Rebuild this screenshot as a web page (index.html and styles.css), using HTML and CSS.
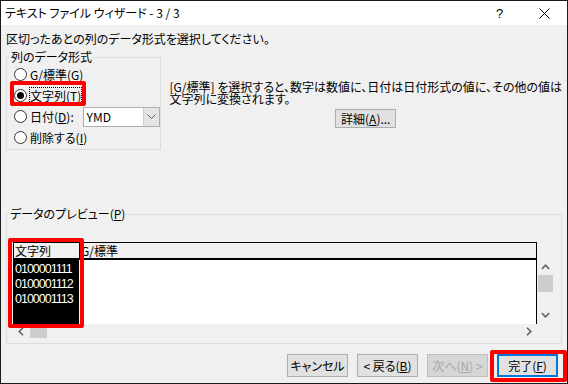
FILE: index.html
```html
<!DOCTYPE html>
<html lang="ja">
<head>
<meta charset="utf-8">
<title>テキスト ファイル ウィザード</title>
<link rel="stylesheet" href="styles.css">
</head>
<body>
<div class="window">
  <div class="titlebar">
    <span class="title">テキスト ファイル ウィザード - 3 / 3</span>
    <span class="tbtn help">?</span>
    <span class="tbtn close"><svg width="11" height="11" viewBox="0 0 11 11"><path d="M0.5 0.5L10.5 10.5M10.5 0.5L0.5 10.5" stroke="#000" stroke-width="1" fill="none"/></svg></span>
  </div>
  <div class="content">
    <p class="instruction">区切ったあとの列のデータ形式を選択してください。</p>
    <div class="top">
      <fieldset class="group format">
        <legend>列のデータ形式</legend>
        <div class="radio"><span class="circle"></span><span>G/標準(<u>G</u>)</span></div>
        <div class="radio"><span class="circle on"></span><span class="focus">文字列(<u>T</u>)</span></div>
        <div class="radio"><span class="circle"></span><span class="date-label">日付(<u>D</u>):</span>
          <span class="select"><span class="value">YMD</span><span class="arrow"><svg width="9" height="5" viewBox="0 0 9 5"><path d="M0.5 0.5L4.5 4.5L8.5 0.5" stroke="#606060" stroke-width="1" fill="none"/></svg></span></span>
        </div>
        <div class="radio"><span class="circle"></span><span>削除する(<u>I</u>)</span></div>
      </fieldset>
      <div class="desc">
        <p class="line">[G/標準] を選択すると、数字は数値に、日付は日付形式の値に、その他の値は</p>
        <p class="line">文字列に変換されます。</p>
        <button class="btn small">詳細(<u>A</u>)...</button>
      </div>
    </div>
    <fieldset class="group preview">
      <legend>データのプレビュー(<u>P</u>)</legend>
      <div class="grid">
        <div class="grid-top">
          <div class="table">
            <div class="thead">
              <span class="c1">文字列</span>
              <span class="c2">G/標準</span>
            </div>
            <div class="tbody">
              <div class="c1 data">
                <div>0100001111</div>
                <div>0100001112</div>
                <div>0100001113</div>
              </div>
              <div class="c2"></div>
            </div>
          </div>
          <div class="vscroll">
            <span class="arrow-box"><svg width="9" height="6" viewBox="0 0 9 6"><path d="M0.8 5L4.5 1.2L8.2 5" stroke="#606060" stroke-width="1.6" fill="none"/></svg></span>
            <span class="vthumb"></span>
            <span class="spacer"></span>
            <span class="arrow-box"><svg width="9" height="6" viewBox="0 0 9 6"><path d="M0.8 1L4.5 4.8L8.2 1" stroke="#606060" stroke-width="1.6" fill="none"/></svg></span>
          </div>
        </div>
        <div class="hscroll">
          <span class="harrow"><svg width="6" height="9" viewBox="0 0 6 9"><path d="M5 0.8L1.2 4.5L5 8.2" stroke="#606060" stroke-width="1.6" fill="none"/></svg></span>
          <span class="hthumb"></span>
          <span class="spacer"></span>
          <span class="harrow"><svg width="6" height="9" viewBox="0 0 6 9"><path d="M1 0.8L4.8 4.5L1 8.2" stroke="#606060" stroke-width="1.6" fill="none"/></svg></span>
        </div>
      </div>
    </fieldset>
    <div class="buttons">
      <button class="btn">キャンセル</button>
      <button class="btn">&lt; 戻る(<u>B</u>)</button>
      <button class="btn disabled">次へ(<u>N</u>) &gt;</button>
      <button class="btn default">完了(<u>F</u>)</button>
    </div>
  </div>
  <div class="hl hl1"></div>
  <div class="hl hl2"></div>
  <div class="hl hl3"></div>
</div>
</body>
</html>
```

FILE: styles.css
```css
html, body {
  margin: 0;
  padding: 0;
}
body {
  width: 568px;
  height: 384px;
  font-family: "Noto Sans CJK JP", "Noto Sans", sans-serif;
  font-size: 12px;
  font-feature-settings: "palt";
  color: #000;
}
.window {
  position: relative;
  box-sizing: border-box;
  width: 568px;
  height: 384px;
  border: 1px solid #1a1a1a;
  background: #f0f0f0;
  display: flex;
  flex-direction: column;
}
.titlebar {
  height: 24px;
  background: #fff;
  display: flex;
  align-items: center;
}
.title {
  flex: 1;
  padding-left: 4px;
  line-height: 24px;
  white-space: nowrap;
}
.tbtn {
  width: 46px;
  height: 24px;
  display: flex;
  align-items: center;
  justify-content: center;
}
.help {
  font-family: "Liberation Sans", sans-serif;
  font-size: 13px;
  padding-left: 3px;
  box-sizing: border-box;
}
.content {
  flex: 1;
  padding: 6px 5px 0 5px;
  display: flex;
  flex-direction: column;
}
.instruction {
  margin: 0;
  line-height: 16px;
  white-space: nowrap;
}
.top {
  margin-top: 3px;
  display: flex;
  align-items: flex-start;
}
.group {
  box-sizing: border-box;
  margin: 0;
  border: 1px solid #dcdcdc;
  min-width: 0;
}
.group legend {
  line-height: 14px;
  font-size: 12px;
  white-space: nowrap;
}
.format {
  width: 165px;
  padding: 0 0 1px 7px;
}
.format legend {
  padding: 0 2px;
  margin-left: -5px;
}
.radio {
  display: flex;
  align-items: center;
  height: 21px;
  white-space: nowrap;
}
.circle {
  flex: none;
  box-sizing: border-box;
  width: 13px;
  height: 13px;
  border: 1px solid #333;
  border-radius: 50%;
  background: #fff;
  margin-right: 3px;
  display: flex;
  align-items: center;
  justify-content: center;
}
.circle.on::after {
  content: "";
  width: 7px;
  height: 7px;
  border-radius: 50%;
  background: #000;
}
.focus {
  outline: 1px dotted #000;
  line-height: 15px;
}
.date-label {
  width: 54px;
}
.select {
  box-sizing: border-box;
  width: 79px;
  height: 20px;
  border: 1px solid #adadad;
  background: #fff;
  display: flex;
  align-items: center;
}
.select .value {
  flex: 1;
  padding-left: 3px;
  font-size: 12px;
}
.select .arrow {
  box-sizing: border-box;
  width: 16px;
  height: 18px;
  background: #e5e5e5;
  border-left: 1px solid #cfcfcf;
  display: flex;
  align-items: center;
  justify-content: center;
}
.desc {
  flex: 1;
  margin-left: 9px;
  padding-top: 31px;
  display: flex;
  flex-direction: column;
}
.desc .line {
  margin: 0;
  height: 12px;
  line-height: 12px;
  white-space: nowrap;
}
.btn {
  box-sizing: border-box;
  width: 61px;
  height: 23px;
  padding: 0;
  font-family: inherit;
  font-size: 12px;
  font-feature-settings: "palt";
  color: #000;
  background: #e1e1e1;
  border: 1px solid #adadad;
  white-space: nowrap;
}
.btn.small {
  align-self: center;
  margin-top: 4px;
  height: 19px;
}
.preview {
  width: 556px;
  margin-top: 57px;
  padding: 0 5px 4px 6px;
}
.preview legend {
  padding: 0 1px;
  margin-left: -4px;
}
.grid {
  margin-top: 21px;
  width: 540px;
  display: flex;
  flex-direction: column;
}
.grid-top {
  display: flex;
}
.table {
  box-sizing: border-box;
  width: 524px;
  border-top: 1px solid #000;
  border-left: 1px solid #000;
  border-right: 1px solid #000;
}
.thead {
  display: flex;
  height: 15px;
  line-height: 15px;
  border-bottom: 2px solid #000;
  white-space: nowrap;
}
.thead .c1 {
  width: 64px;
  padding-left: 1px;
  border-right: 1px solid #000;
}
.thead .c2 {
  padding-left: 1px;
}
.tbody {
  display: flex;
  height: 64px;
  background: #fff;
}
.tbody .c1 {
  box-sizing: border-box;
  width: 66px;
  background: #000;
  border-right: 1px solid #fff;
  padding: 2px 0 0 1px;
  color: #fff;
  font-family: "Liberation Sans", sans-serif;
  font-size: 12.5px;
  line-height: 15px;
  letter-spacing: -1px;
  white-space: nowrap;
}
.vscroll {
  width: 16px;
  height: 64px;
  margin-top: 17px;
  display: flex;
  flex-direction: column;
}
.arrow-box {
  height: 16px;
  display: flex;
  align-items: center;
  justify-content: center;
}
.vthumb {
  margin-left: 1px;
  width: 15px;
  height: 17px;
  background: #cdcdcd;
}
.spacer {
  flex: 1;
}
.hscroll {
  width: 524px;
  height: 15px;
  display: flex;
  align-items: flex-start;
}
.harrow {
  width: 16px;
  height: 15px;
  display: flex;
  align-items: center;
  justify-content: center;
}
.hthumb {
  margin-left: 1px;
  width: 17px;
  height: 14px;
  background: #cdcdcd;
}
.buttons {
  margin-top: 10px;
  padding-right: 4px;
  display: flex;
  justify-content: flex-end;
  gap: 9px;
}
.btn.disabled {
  color: #a8a8a8;
  background: #d6d6d6;
  border-color: #bfbfbf;
}
.btn.default {
  border: 2px solid #0078d7;
}
.hl {
  position: absolute;
  box-sizing: border-box;
  border: 4px solid #ff0000;
  border-radius: 2px;
}
.hl1 {
  left: 9px;
  top: 80px;
  width: 76px;
  height: 25px;
}
.hl2 {
  left: 7px;
  top: 237px;
  width: 76px;
  height: 90px;
}
.hl3 {
  left: 489px;
  top: 349px;
  width: 77px;
  height: 32px;
}
```
